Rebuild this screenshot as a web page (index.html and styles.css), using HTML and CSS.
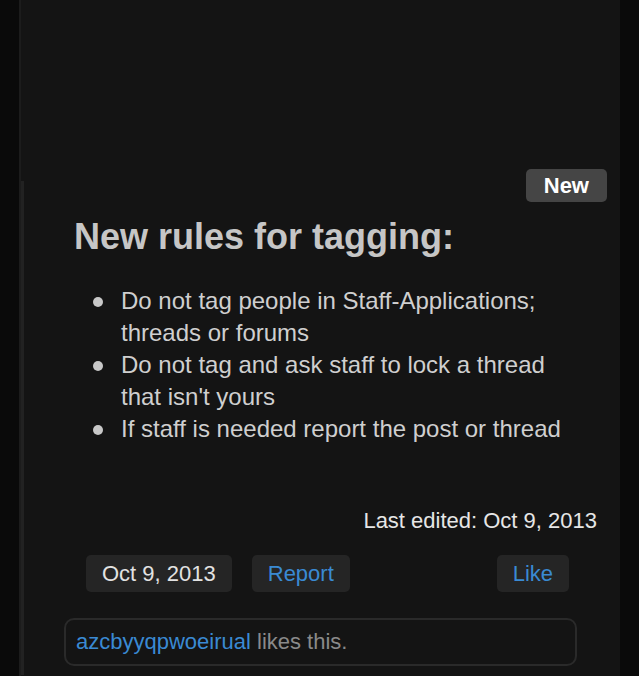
FILE: index.html
```html
<!DOCTYPE html>
<html lang="en">

<head>
  <meta charset="UTF-8">
  <title>New rules for tagging</title>
  <link rel="stylesheet" href="styles.css">
</head>

<body>
  <div class="panel">
    <div class="message">
      <span class="badge">New</span>
      <h2 class="title">New rules for tagging:</h2>
      <ul class="rules">
        <li>Do not tag people in Staff-Applications; threads or forums</li>
        <li>Do not tag and ask staff to lock a thread that isn't yours</li>
        <li>If staff is needed report the post or thread</li>
      </ul>
      <div class="edited">Last edited: Oct 9, 2013</div>
      <div class="actions">
        <span class="btn date">Oct 9, 2013</span>
        <a class="btn link" href="#">Report</a>
        <a class="btn link like" href="#">Like</a>
      </div>
      <div class="likes">
        <a class="user" href="#">azcbyyqpwoeirual</a> likes this.
      </div>
    </div>
  </div>
</body>

</html>
```

FILE: styles.css
```css
body {
  margin: 0;
  background: #0a0a0a;
  font-family: "Liberation Sans", Arial, sans-serif;
}

.panel {
  box-sizing: border-box;
  margin-left: 19px;
  width: 601px;
  min-height: 676px;
  padding-top: 181px;
  background: #141414;
  border-left: 2px solid #1c1c1c;
}

.message {
  position: relative;
  padding: 0 23px 9px 40px;
  border-left: 3px solid #222;
}

.badge {
  position: absolute;
  top: -12px;
  right: 13px;
  padding: 0 18px;
  line-height: 33px;
  border-radius: 5px;
  background: #454545;
  color: #fff;
  font-size: 22px;
  font-weight: bold;
}

.title {
  margin: 0 0 0 10px;
  padding-top: 35px;
  color: #c6c6c6;
  font-size: 36px;
  line-height: 41px;
  font-weight: bold;
}

.rules {
  list-style: none;
  margin: 28px 19px 0 0;
  padding: 0;
}

.rules li {
  display: flex;
  color: #cfcfcf;
  font-size: 24px;
  line-height: 32px;
}

.rules li::before {
  content: "";
  flex: none;
  width: 10px;
  height: 10px;
  margin: 12px 18px 0 29px;
  border-radius: 50%;
  background: #c8c8c8;
}

.edited {
  margin-top: 63px;
  text-align: right;
  color: #e6e6e6;
  font-size: 22px;
  line-height: 26px;
}

.actions {
  display: flex;
  gap: 20px;
  margin-top: 21px;
  padding: 0 28px 0 22px;
}

.btn {
  padding: 6px 16px;
  border-radius: 5px;
  background: #252525;
  font-size: 22px;
  line-height: 25px;
  text-decoration: none;
}

.date {
  color: #e2e2e2;
}

.link {
  color: #3a8ad3;
}

.like {
  margin-left: auto;
}

.likes {
  margin: 26px 20px 0 0;
  padding: 9px 10px;
  border: 2px solid #2a2a2a;
  border-radius: 10px;
  color: #8a8a8a;
  font-size: 22px;
  line-height: 26px;
}

.likes .user {
  color: #3a8ad3;
  text-decoration: none;
}
```
